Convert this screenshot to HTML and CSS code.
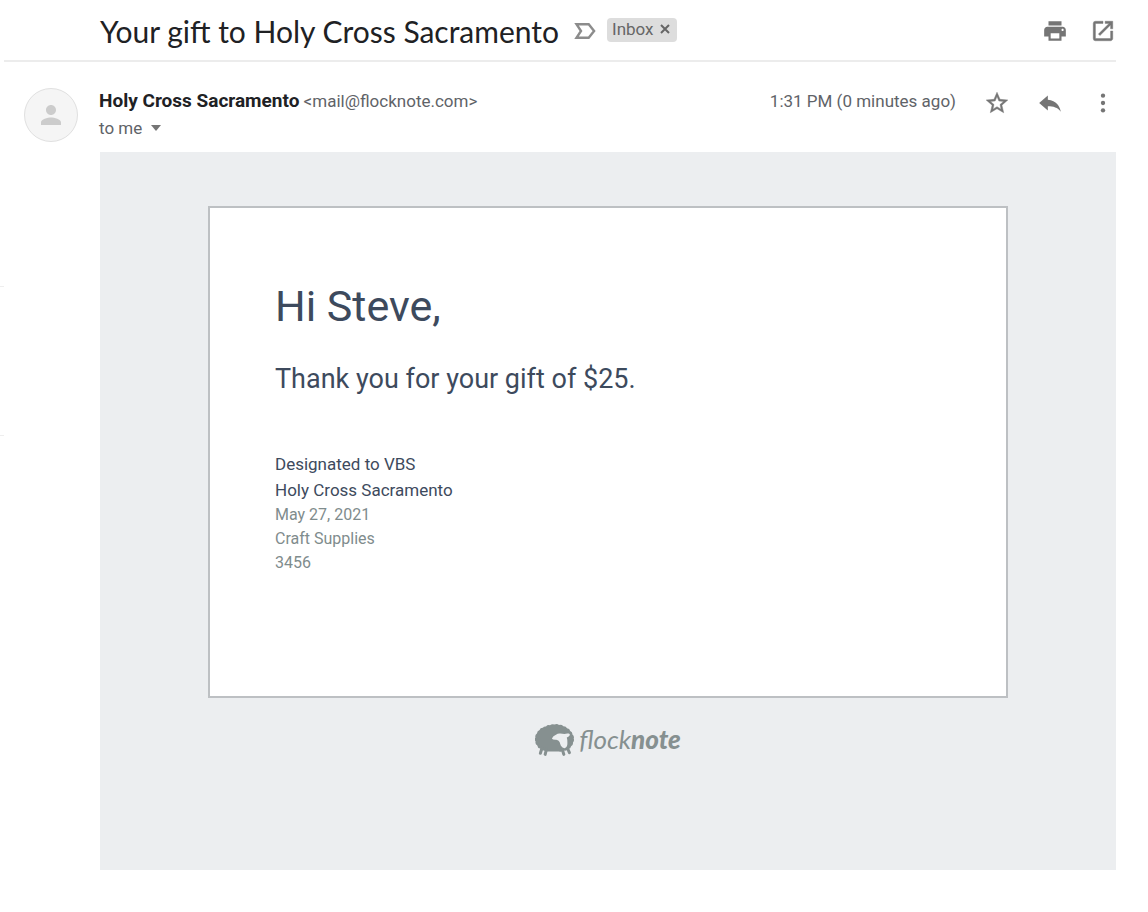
FILE: index.html
```html
<!DOCTYPE html>
<html lang="en">
<head>
  <meta charset="UTF-8" />
  <meta name="viewport" content="width=device-width, initial-scale=1.0"/>
  <title>Your gift to Holy Cross Sacramento</title>
  <link rel="stylesheet" href="styles.css">
</head>
<body>
  <div class="page">
    <aside class="side-edge"></aside>

    <main class="mail">
      <header class="subject-bar">
        <h1>Your gift to Holy Cross Sacramento</h1>
        <button type="button" class="icon-btn marker" aria-label="Mark as important">
          <svg width="24" height="20" viewBox="0 0 24 20"><path d="M3.5 3.2h12.2l5.400 6.800-5.400 6.800H3.500L8 10z" fill="none" stroke="#8c8c8c" stroke-width="2.400"/></svg>
        </button>
        <span class="label">Inbox
          <button type="button" class="icon-btn" aria-label="Remove label">
            <svg width="10" height="10" viewBox="0 0 10 10"><path d="M1 1l8 8M9 1L1 9" stroke="#666" stroke-width="2"/></svg>
          </button>
        </span>
        <div class="subject-tools">
          <button type="button" class="icon-btn" aria-label="Print">
            <svg width="26" height="26" viewBox="0 0 24 24"><path fill="#757575" d="M19 8H5c-1.660 0-3 1.340-3 3v6h4v4h12v-4h4v-6c0-1.660-1.340-3-3-3zm-3 11H8v-5h8v5zm3-7c-.550 0-1-.450-1-1s.450-1 1-1 1 .450 1 1-.450 1-1 1zm-1-9H6v4h12V3z"/></svg>
          </button>
          <button type="button" class="icon-btn" aria-label="Open in new window">
            <svg width="26" height="26" viewBox="0 0 24 24"><path fill="#757575" stroke="#757575" stroke-width=".4" d="M19 19H5V5h7V3H5a2 2 0 0 0-2 2v14a2 2 0 0 0 2 2h14c1.100 0 2-.900 2-2v-7h-2v7zM14 3v2h3.590l-9.830 9.830 1.410 1.410L19 6.410V10h2V3h-7z"/></svg>
          </button>
        </div>
      </header>

      <section class="sender">
        <div class="avatar">
          <svg width="30" height="30" viewBox="0 0 24 24"><path fill="#ccc" d="M12 12c2.210 0 4-1.790 4-4s-1.790-4-4-4-4 1.790-4 4 1.790 4 4 4zm0 2c-2.670 0-8 1.340-8 4v2h16v-2c0-2.660-5.330-4-8-4z"/></svg>
        </div>
        <div class="from">
          <p class="from-line"><strong>Holy Cross Sacramento</strong> <span>&lt;mail@flocknote.com&gt;</span></p>
          <p class="to-line">to me
            <button type="button" class="icon-btn" aria-label="Show details">
              <svg width="10" height="6" viewBox="0 0 10 6"><path d="M0 0h10L5 6z" fill="#757575"/></svg>
            </button>
          </p>
        </div>
        <time class="date">1:31 PM (0 minutes ago)</time>
        <div class="sender-tools">
          <button type="button" class="icon-btn" aria-label="Star">
            <svg width="26" height="26" viewBox="0 0 24 24"><path fill="#757575" stroke="#757575" stroke-width=".4" d="M22 9.240l-7.190-.620L12 2 9.190 8.630 2 9.240l5.460 4.730L5.820 21 12 17.270 18.180 21l-1.630-7.030L22 9.240zM12 15.400l-3.760 2.270 1-4.280-3.320-2.880 4.380-.380L12 6.100l1.710 4.040 4.380.380-3.320 2.880 1 4.280L12 15.400z"/></svg>
          </button>
          <button type="button" class="icon-btn" aria-label="Reply">
            <svg width="26" height="26" viewBox="0 0 24 24"><path fill="#757575" d="M10 9V5l-8 7 8 7v-4.100c5 0 9.200 1.100 12 5.100-1-5-4-10-12-11z"/></svg>
          </button>
          <button type="button" class="icon-btn" aria-label="More">
            <svg width="26" height="26" viewBox="0 0 24 24"><g fill="#757575"><circle cx="12" cy="5.200" r="2"/><circle cx="12" cy="12" r="2"/><circle cx="12" cy="18.800" r="2"/></g></svg>
          </button>
        </div>
      </section>

      <article class="message">
        <div class="card">
          <h2>Hi Steve,</h2>
          <p class="thanks">Thank you for your gift of $25.</p>
          <p class="fund">Designated to VBS</p>
          <p class="fund">Holy Cross Sacramento</p>
          <p class="detail">May 27, 2021</p>
          <p class="detail">Craft Supplies</p>
          <p class="detail">3456</p>
        </div>

        <div class="brand">
          <svg width="40" height="32" viewBox="0 0 40 32">
            <!-- fleece -->
            <path fill="#869090" d="M11 2.500Q12.500.500 15 1.200 17-.500 19.500.600 22-.600 24 .900q3-.400 4.300 1.400 2.700-.200 3.700 2 2.700.300 3.200 2.700 2.500 1 2.200 3.500 2.200 1.700 1.300 4 .900 2.300-.700 4.100.300 2.600-1.900 3.600-.400 2.400-2.900 2.800-1.700 2.300-4.200 1.600-2.500 1.700-5 .8H13q-2.500.700-4-.9-2.800.200-3.800-2.100-2.700-.500-2.900-3Q-.100 20.200.600 17.600-.800 15.600.400 13.400-.200 10.800 1.900 9.500 2.200 6.900 4.600 6 5.200 3.600 7.900 3.700 9 2.200 11 2.500z"/>
            <!-- legs -->
            <path fill="none" stroke="#869090" stroke-width="3" stroke-linecap="round" d="M7 24l-1.600 5.300M11.500 25l-1.300 5.400M27.200 25l1.600 5.400M32 23l2.400 5.600"/>
            <!-- face -->
            <path fill="#eceef0" d="M21 10.800q1.700-1.400 4.200-1.200l4.300.3q2-.600 4.300-.3 1.700.400.800 1.900-1.100 1.600-2.800 2 .800 2.700.6 5.600.100 4-2.300 5-2.500.500-4.200-2.400-.700-1.600-1.300-3.700-1-1.900-3.300-2.200-3.700.300-4.400-1.400 1.100-2.400 4.100-3.600z"/>
          </svg>
          <span class="wordmark">flock<b>note</b></span>
        </div>
      </article>
    </main>
  </div>
</body>
</html>
```

FILE: styles.css
```css
* {
  box-sizing: border-box;
}
body {
  margin: 0;
  font-family: Roboto, Arial, sans-serif;
  font-size: 17px;
  background-color: #fff;
  color: #202124;
}
h1, h2, p {
  margin: 0;
  font-weight: normal;
}
.page {
  display: grid;
  grid-template-columns: 4px 1fr;
  align-items: start;
  padding-right: 32px;
}
.side-edge {
  height: 150px;
  margin-top: 286px;
  border-top: 1px solid #eee;
  border-bottom: 1px solid #eee;
}
.icon-btn {
  display: inline-flex;
  padding: 0;
  border: none;
  background: none;
  cursor: pointer;
}

/* subject */
.subject-bar {
  display: flex;
  align-items: center;
  height: 62px;
  padding: 2px 0 0 96px;
  border-bottom: 2px solid #ececec;
}
h1 {
  font-family: Lato, "Open Sans", sans-serif;
  font-size: 30px;
  line-height: 40px;
}
.marker {
  margin-left: 14px;
}
.label {
  display: flex;
  align-items: center;
  gap: 6px;
  height: 24px;
  margin: 0 0 2px 10px;
  padding: 0 7px 2px 5px;
  border-radius: 4px;
  background-color: #ddd;
  color: #666;
}
.subject-tools {
  display: flex;
  gap: 22px;
  margin-left: auto;
}

/* sender */
.sender {
  display: flex;
  align-items: flex-start;
  height: 90px;
  padding: 26px 0 0 20px;
}
.avatar {
  display: flex;
  align-items: center;
  justify-content: center;
  width: 54px;
  height: 54px;
  border: 1px solid #e0e0e0;
  border-radius: 50%;
  background-color: #f5f5f5;
}
.from {
  margin-left: 21px;
  color: #5f6368;
}
.from-line {
  line-height: 26px;
}
.from-line strong {
  font-size: 19px;
  color: #202124;
}
.to-line {
  display: flex;
  align-items: center;
  gap: 9px;
  line-height: 28px;
}
.date {
  margin-left: auto;
  line-height: 26px;
  color: #5f6368;
}
.sender-tools {
  display: flex;
  gap: 27px;
  margin: 2px 0 0 28px;
}

/* message */
.message {
  min-height: 718px;
  margin-left: 96px;
  padding: 54px 24px;
  background-color: #eceef0;
}
.card {
  max-width: 800px;
  min-height: 492px;
  margin: 0 auto;
  padding: 70px 65px;
  border: 2px solid #bdc0c3;
  background-color: #fff;
  color: #3d4a5d;
}
h2 {
  font-size: 43px;
  line-height: 56px;
}
.thanks {
  margin: 28px 0 55px;
  font-size: 27px;
  line-height: 34px;
}
.fund {
  line-height: 26px;
}
.detail {
  font-size: 16px;
  line-height: 24px;
  color: #7f8c8d;
}
.brand {
  display: flex;
  justify-content: center;
  gap: 4px;
  margin-top: 26px;
  color: #869090;
}
.wordmark {
  font-family: Lato, sans-serif;
  font-size: 26px;
  font-style: italic;
  line-height: 30px;
}
.wordmark b {
  font-weight: 900;
}
```
